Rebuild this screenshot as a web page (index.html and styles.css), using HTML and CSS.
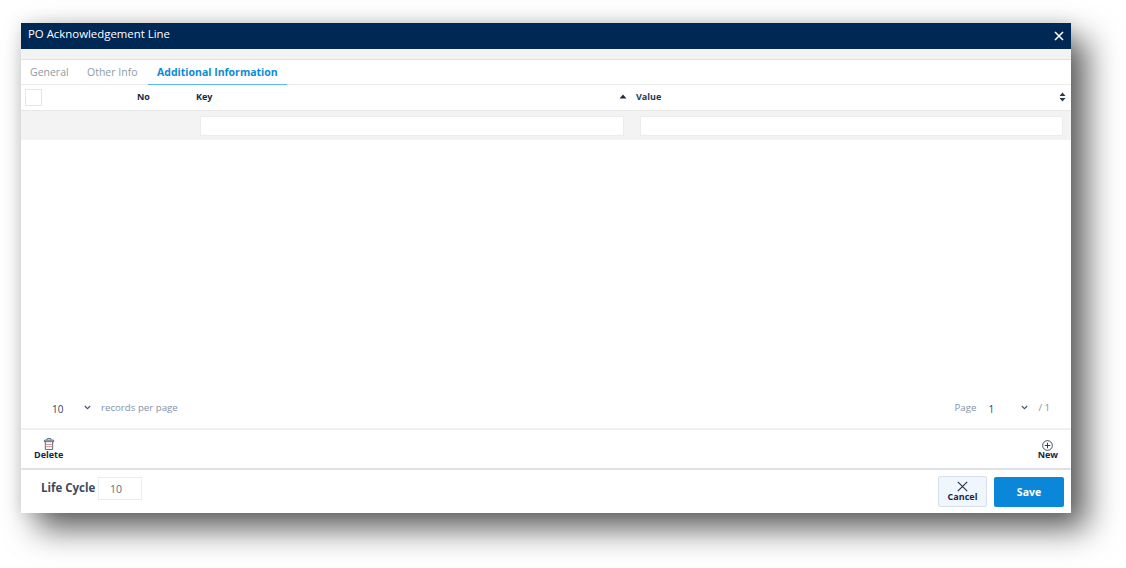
FILE: index.html
```html
<!DOCTYPE html>
<html lang="en">
<head>
<meta charset="utf-8">
<title>PO Acknowledgement Line</title>
<link rel="stylesheet" href="styles.css">
</head>
<body>
<div class="dialog">
  <header class="titlebar">
    <span class="title">PO Acknowledgement Line</span>
    <svg class="close" width="10" height="10" viewBox="0 0 10 10"><path d="M1 1l8 8M9 1l-8 8" stroke="#fff" stroke-width="1.6" fill="none"/></svg>
  </header>
  <div class="strip"></div>
  <nav class="tabs">
    <span class="tab tab-general">General</span>
    <span class="tab tab-other">Other Info</span>
    <span class="tab tab-active">Additional Information</span>
  </nav>
  <div class="head-row">
    <span class="cell-check"><span class="checkbox"></span></span>
    <span class="cell-no">No</span>
    <span class="cell-key">Key<svg class="sort-up" width="8" height="5" viewBox="0 0 8 5"><path d="M4 0.5L7.5 4.5H0.5z" fill="#1f2d3d"/></svg></span>
    <span class="cell-value">Value<svg class="sort-both" width="7" height="10" viewBox="0 0 7 10"><path d="M3.5 0.5L6.5 4H0.5zM3.5 9.5L0.5 6H6.5z" fill="#2a3a4d"/></svg></span>
  </div>
  <div class="filter-row">
    <span class="filter filter-key"></span>
    <span class="filter filter-value"></span>
  </div>
  <main class="table-body"></main>
  <div class="pager">
    <span class="pager-size">10</span>
    <svg class="chev" width="7" height="5" viewBox="0 0 7 5"><path d="M0.8 1l2.7 2.7L6.2 1" stroke="#44566c" stroke-width="1.1" fill="none"/></svg>
    <span class="pager-label">records per page</span>
    <span class="pager-spacer"></span>
    <span class="pager-label">Page</span>
    <span class="pager-num">1</span>
    <svg class="chev" width="7" height="5" viewBox="0 0 7 5"><path d="M0.8 1l2.7 2.7L6.2 1" stroke="#44566c" stroke-width="1.1" fill="none"/></svg>
    <span class="pager-label pager-total">/ 1</span>
  </div>
  <div class="toolbar">
    <button class="tool tool-delete">
      <svg width="12" height="12" viewBox="0 0 12 13"><path d="M3.5 2.2L4.2 .6h3.6l.7 1.6M1 2.4h10v1.6H1zM2 4v8.4h8V4" fill="none" stroke="#3a4a5e" stroke-width=".9"/><path d="M2.5 7h7M2.5 9.4h7" stroke="#a56d6d" stroke-width=".8"/></svg>
      <span>Delete</span>
    </button>
    <button class="tool tool-new">
      <svg class="new-icon" width="11" height="11" viewBox="0 0 12 12"><circle cx="6" cy="6" r="5.3" fill="none" stroke="#1f2d3d" stroke-width=".9"/><path d="M6 3v6M3 6h6" stroke="#1f2d3d" stroke-width="1"/></svg>
      <span>New</span>
    </button>
  </div>
  <footer class="footer">
    <span class="lc-label">Life Cycle</span>
    <span class="lc-input">10</span>
    <span class="footer-spacer"></span>
    <button class="btn-cancel">
      <svg width="11" height="11" viewBox="0 0 10 10"><path d="M.7.7l8.6 8.6M9.3.7L.7 9.3" stroke="#1f2d3d" stroke-width="1" fill="none"/></svg>
      <span>Cancel</span>
    </button>
    <button class="btn-save">Save</button>
  </footer>
</div>
</body>
</html>
```
FILE: styles.css
```css
html, body { margin: 0; height: 100%; background: #fff; overflow: hidden; }
body { padding: 23px 0 0 21px; box-sizing: border-box; font-family: "Open Sans", "Noto Sans", sans-serif; color: #1f2d3d; }
button { font-family: inherit; padding: 0; cursor: pointer; }

.dialog {
  width: 1050px; height: 490px; background: #fff;
  display: flex; flex-direction: column;
  box-shadow: 16px 16px 30px rgba(0,0,0,.62), 0 0 16px rgba(0,0,0,.12);
}

.titlebar { height: 26px; flex: none; background: #002855; color: #fff; display: flex; align-items: center; justify-content: space-between; padding: 0 7px 0 7px; box-sizing: border-box; }
.title { font-size: 11.4px; margin-top: -5px; }
.close { margin-top: 0; }

.strip { height: 10px; flex: none; background: #f3f3f3; border-bottom: 1px solid #e2e2e2; }

.tabs { height: 25px; flex: none; display: flex; box-sizing: border-box; border-bottom: 1px solid #ececec; font-size: 10.5px; }
.tab { display: flex; align-items: center; color: #8d9ba5; padding: 0 9px 1px; height: 25px; box-sizing: border-box; }
.tab-general { width: 57px; }
.tab-other { width: 70px; }
.tab-active { width: 139px; color: #0a8bd6; font-weight: 700; border-bottom: 1px solid #5ab7ec; }

.head-row { height: 26px; flex: none; display: flex; align-items: center; border-bottom: 1px solid #e8e8e8; box-sizing: border-box; font-size: 9px; font-weight: 700; color: #14294a; padding-bottom: 2px; }
.cell-check { width: 100px; padding-left: 4px; box-sizing: border-box; display: flex; margin-top: 1px; }
.checkbox { width: 17px; height: 17px; box-sizing: border-box; border: 1px solid #e6e6e6; background: #fff; }
.cell-no { width: 75px; padding-left: 16px; box-sizing: border-box; }
.cell-key { width: 440px; display: flex; align-items: center; justify-content: space-between; padding-right: 9px; box-sizing: border-box; }
.cell-value { flex: 1; display: flex; align-items: center; justify-content: space-between; padding-right: 5px; color: #1f3a5f; }

.filter-row { height: 29px; flex: none; background: #f3f3f3; display: flex; align-items: center; padding-left: 179px; box-sizing: border-box; }
.filter { height: 20px; background: #fff; border: 1px solid #ececec; box-sizing: border-box; display: block; }
.filter-key { width: 424px; }
.filter-value { width: 423px; margin-left: 16px; }

.table-body { flex: 1; background: #fff; }

.pager { height: 29px; flex: none; display: flex; align-items: center; padding: 0 21px 12px 31px; box-sizing: border-box; font-size: 9.7px; }
.pager-size { width: 32px; color: #31455f; font-size: 10px; padding-top: 2px; }
.pager-label { color: #8392aa; }
.chev + .pager-label { margin-left: 10px; }
.pager-spacer { flex: 1; }
.pager-num { width: 33px; margin-left: 12px; color: #31455f; font-size: 10px; padding-top: 2px; }
.pager-total { margin-left: 9px; }

.toolbar { height: 42px; flex: none; box-sizing: border-box; border-top: 2px solid #f0f0f0; border-bottom: 2px solid #dfe2e5; display: flex; justify-content: space-between; padding: 8px 13px 0 13px; }
.tool { background: none; border: 0; display: flex; flex-direction: column; align-items: center; font-size: 9px; font-weight: 700; color: #14294a; line-height: 10px; height: 26px; }
.tool svg { flex: none; }
.tool .new-icon { margin: 2px 0 -1px; }

.footer { height: 43px; flex: none; display: flex; align-items: center; padding: 0 7px 0 20px; }
.lc-label { font-size: 11.5px; font-weight: 700; color: #3c4a5c; width: 57px; margin-top: -8px; }
.lc-input { width: 44px; height: 23px; box-sizing: border-box; border: 1px solid #e8edf2; font-size: 10.5px; color: #5f6b78; display: flex; align-items: center; padding-left: 11px; margin-top: -6px; }
.footer-spacer { flex: 1; }
.btn-cancel { width: 49px; height: 31px; box-sizing: border-box; background: #eff6fe; border: 1px solid #d7dfe8; border-radius: 2px; display: flex; flex-direction: column; align-items: center; justify-content: center; font-size: 9px; font-weight: 700; color: #14294a; line-height: 9px; padding-bottom: 2px; }
.btn-save { width: 70px; height: 30px; margin-left: 7px; background: #0a87d8; border: 0; border-radius: 2px; color: #fff; font-size: 10.5px; font-weight: 700; }
```
